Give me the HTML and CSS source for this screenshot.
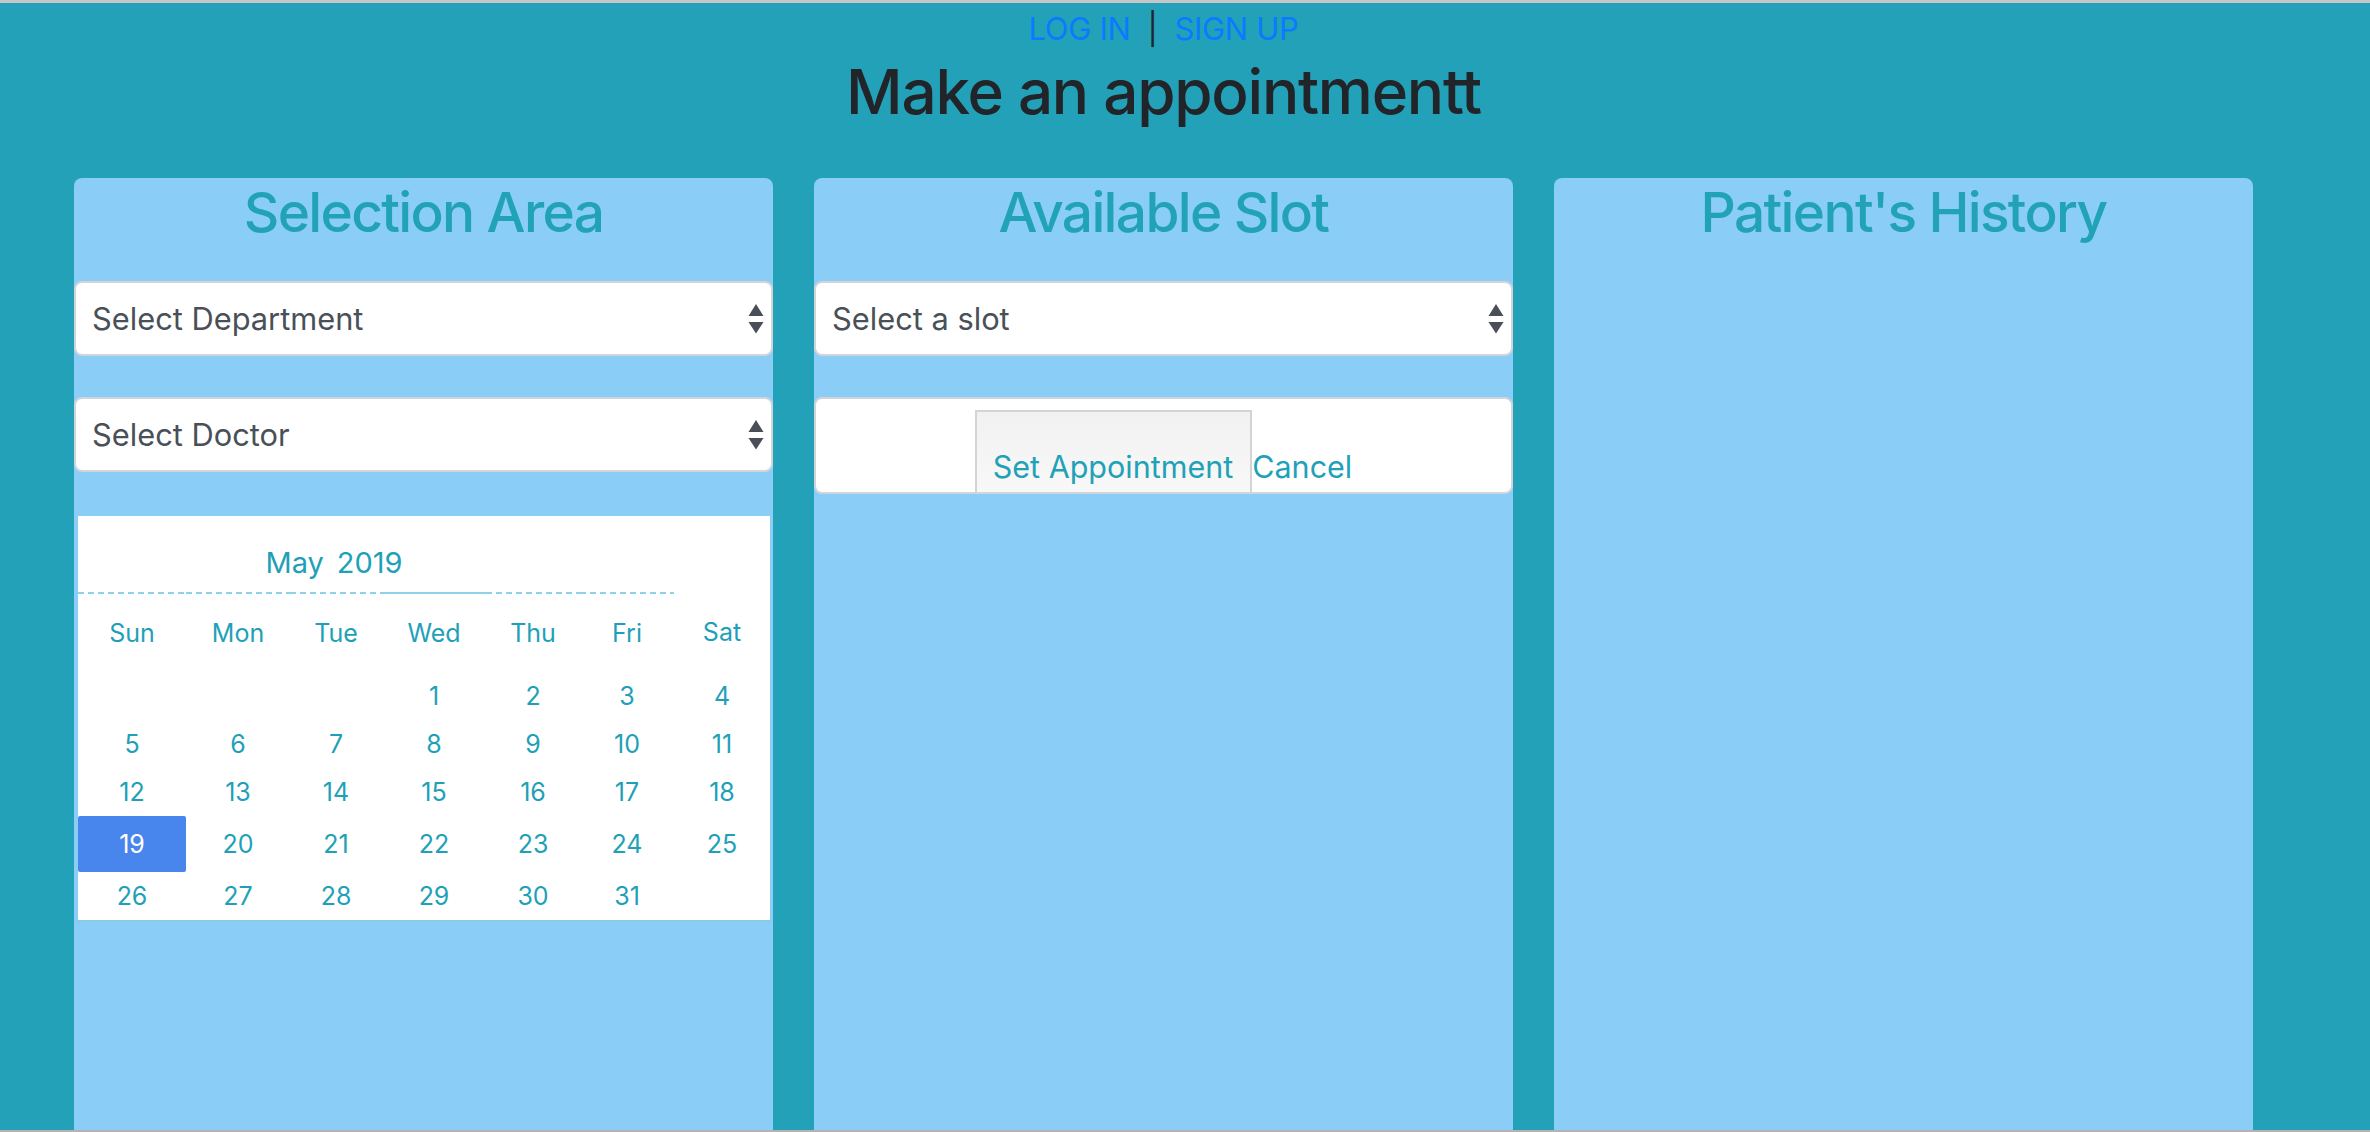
FILE: index.html
```html
<!DOCTYPE html>
<html lang="en">
<head>
<meta charset="utf-8">
<title>Make an appointment</title>
<link rel="stylesheet" href="styles.css">
</head>
<body>
<div class="page">
  <nav class="auth"><a class="auth-link" href="#">LOG IN</a><span class="sep">|</span><a class="auth-link" href="#">SIGN UP</a></nav>
  <h1 class="heading">Make an appointmentt</h1>
  <div class="cols">
    <section class="panel">
      <h3 class="panel-title">Selection Area</h3>
      <div class="select"><span>Select Department</span><svg class="arrows" width="16" height="30" viewBox="0 0 16 30"><polygon points="8,0 15.5,12 0.5,12"/><polygon points="0.5,18 15.5,18 8,29.5"/></svg></div>
      <div class="select select-gap"><span>Select Doctor</span><svg class="arrows" width="16" height="30" viewBox="0 0 16 30"><polygon points="8,0 15.5,12 0.5,12"/><polygon points="0.5,18 15.5,18 8,29.5"/></svg></div>
      <div class="calendar">
        <div class="cal-rule c1"></div>
        <div class="cal-rule c2"></div>
        <div class="cal-rule c3"></div>
        <div class="cal-rule c4 solid"></div>
        <div class="cal-rule c5"></div>
        <div class="cal-rule c6"></div>
        <div class="cal-rule c7 none"></div>
        <div class="cal-title"><span>May</span><span>2019</span></div>
        <div class="wd">Sun</div><div class="wd">Mon</div><div class="wd">Tue</div><div class="wd">Wed</div><div class="wd">Thu</div><div class="wd">Fri</div><div class="wd sat">Sat</div>
        <div class="day"></div><div class="day"></div><div class="day"></div><div class="day">1</div><div class="day">2</div><div class="day">3</div><div class="day">4</div>
        <div class="day">5</div><div class="day">6</div><div class="day">7</div><div class="day">8</div><div class="day">9</div><div class="day">10</div><div class="day">11</div>
        <div class="day">12</div><div class="day">13</div><div class="day">14</div><div class="day">15</div><div class="day">16</div><div class="day">17</div><div class="day">18</div>
        <div class="day sel">19</div><div class="day">20</div><div class="day">21</div><div class="day">22</div><div class="day">23</div><div class="day">24</div><div class="day">25</div>
        <div class="day">26</div><div class="day">27</div><div class="day">28</div><div class="day">29</div><div class="day">30</div><div class="day">31</div><div class="day"></div>
      </div>
    </section>
    <section class="panel">
      <h3 class="panel-title">Available Slot</h3>
      <div class="select"><span>Select a slot</span><svg class="arrows" width="16" height="30" viewBox="0 0 16 30"><polygon points="8,0 15.5,12 0.5,12"/><polygon points="0.5,18 15.5,18 8,29.5"/></svg></div>
      <div class="actions"><button class="btn-set" type="button">Set Appointment</button><a class="cancel" href="#">Cancel</a></div>
    </section>
    <section class="panel">
      <h3 class="panel-title">Patient's History</h3>
    </section>
  </div>
</div>
</body>
</html>
```

FILE: styles.css
```css
html, body {
  margin: 0;
}

body {
  height: 1132px;
  box-sizing: border-box;
  border-top: 3px solid #c6c6c6;
  border-bottom: 2px solid #b3b3b3;
  background: #23a1b8;
  font-family: Inter, "Liberation Sans", sans-serif;
  overflow: hidden;
  display: flex;
  flex-direction: column;
}

.page {
  flex: 1;
  min-height: 0;
  display: flex;
  flex-direction: column;
  padding: 0 117px 0 74px;
}

.auth {
  text-align: center;
  font-size: 31px;
  line-height: 46px;
  padding-top: 3px;
  letter-spacing: -0.01em;
}

.auth-link {
  color: #0a7bff;
  text-decoration: none;
}

.sep {
  color: #212529;
  margin: 0 17px;
}

.heading {
  margin: 2.5px 0 49.5px;
  text-align: center;
  font-size: 62px;
  font-weight: 500;
  line-height: 74px;
  color: #212529;
  letter-spacing: -0.02em;
}

.cols {
  flex: 1;
  display: flex;
  gap: 41px;
}

.panel {
  width: 699px;
  flex: none;
  box-sizing: border-box;
  padding-top: 1px;
  background: #8acdf6;
  border-radius: 8px 8px 0 0;
}

.panel-title {
  margin: 0;
  text-align: center;
  font-size: 55px;
  font-weight: 500;
  line-height: 66px;
  color: #22a2b9;
  letter-spacing: -0.03em;
}

.select {
  height: 75px;
  box-sizing: border-box;
  margin-top: 36px;
  border: 2px solid #d1d5da;
  border-radius: 8px;
  background: #fff;
  display: flex;
  align-items: center;
  justify-content: space-between;
  padding: 0 7px 0 16px;
  font-size: 30.8px;
  color: #495057;
}

.select-gap {
  margin-top: 41px;
}

.arrows {
  fill: #4a4f57;
  margin-top: 1px;
}

/* Calendar */
.calendar {
  margin: 44px 3px 0 4px;
  background: #fff;
  border-bottom: 2px solid #86cbe8;
  display: grid;
  grid-template-columns: 108px 104px 92px 104px 94px 94px 96px;
  grid-template-rows: 78px 78px 48px 48px 48px 56px 48px;
  color: #1ea1b8;
  font-size: 25px;
}

.cal-rule {
  grid-row: 1;
  align-self: end;
  height: 2px;
  background: repeating-linear-gradient(90deg, #8fd0ea 0 6px, transparent 6px 10px);
}

.cal-rule.solid {
  background: #8fd0ea;
}

.cal-rule.none {
  background: none;
}

.c1 { grid-column: 1; }
.c2 { grid-column: 2; }
.c3 { grid-column: 3; }
.c4 { grid-column: 4; }
.c5 { grid-column: 5; }
.c6 { grid-column: 6; }
.c7 { grid-column: 7; }

.cal-title {
  grid-row: 1;
  grid-column: 2 / 5;
  align-self: start;
  display: flex;
  justify-content: center;
  gap: 13px;
  padding-top: 29px;
  padding-right: 4px;
  font-size: 29px;
  line-height: 36px;
}

.wd,
.day {
  display: flex;
  align-items: center;
  justify-content: center;
}

.wd.sat {
  padding-bottom: 3px;
}

.day.sel {
  background: #4886ee;
  color: #fff;
  border-radius: 2px;
}

/* Actions */
.actions {
  margin-top: 41px;
  height: 97px;
  box-sizing: border-box;
  border: 2px solid #d1d5da;
  border-radius: 8px;
  background: #fff;
  text-align: center;
  padding-top: 11px;
  overflow: hidden;
  white-space: nowrap;
  font-size: 30.5px;
}

.btn-set {
  display: inline-block;
  vertical-align: baseline;
  box-sizing: border-box;
  height: 82px;
  margin: 0;
  padding: 30px 17px 0 16px;
  border: 2px solid #d4d4d4;
  border-bottom: 0;
  background: linear-gradient(#f1f1f1, #f8f8f8);
  font-family: inherit;
  font-size: 30.5px;
  line-height: 36px;
  color: #1fa2b8;
}

.cancel {
  color: #1fa2b8;
  text-decoration: none;
}
```
